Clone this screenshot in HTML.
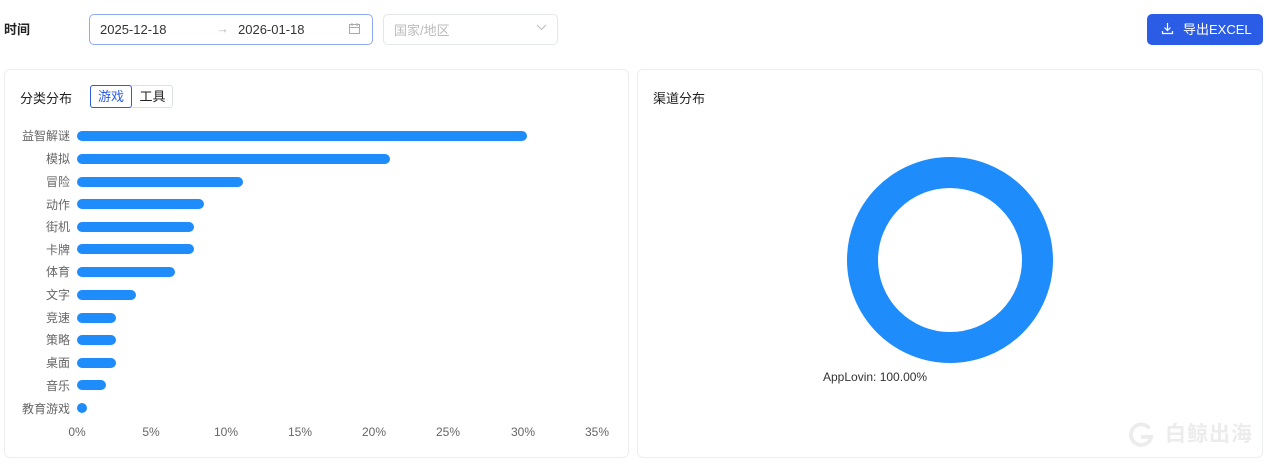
<!DOCTYPE html>
<html><head><meta charset="utf-8"><style>
*{box-sizing:border-box;margin:0;padding:0}
body{width:1269px;height:465px;background:#fff;font-family:"Liberation Sans","Noto Sans CJK SC",sans-serif;position:relative;overflow:hidden;color:#333}
.a{position:absolute}
.card{position:absolute;border:1px solid #eceef2;border-radius:6px;background:#fff}
.lbl{position:absolute;left:0;width:70px;font-size:12px;color:#666;text-align:right;white-space:nowrap}
.bar{position:absolute;left:77px;height:10px;border-radius:5px;background:#1e8cfa}
.tick{position:absolute;top:425px;font-size:12px;color:#666;transform:translateX(-50%)}
</style></head><body>
<div class="a" style="left:4px;top:19px;font-size:13px;font-weight:bold;color:#222">时间</div>
<div class="a" style="left:89px;top:14px;width:284px;height:31px;border:1px solid #8fa9f3;border-radius:5px"></div>
<div class="a" style="left:100px;top:22px;font-size:13px;color:#333">2025-12-18</div>
<div class="a" style="left:216px;top:21px;font-size:13px;color:#bbb">→</div>
<div class="a" style="left:238px;top:22px;font-size:13px;color:#333">2026-01-18</div>
<svg class="a" style="left:348px;top:22px" width="13" height="13" viewBox="0 0 13 13" fill="none" stroke="#aaa" stroke-width="1"><rect x="1.5" y="2.5" width="10" height="9"/><path d="M1.5 5.5h10M4 1v3M9 1v3"/></svg>
<div class="a" style="left:383px;top:14px;width:175px;height:31px;border:1px solid #e4e6ea;border-radius:5px"></div>
<div class="a" style="left:394px;top:20px;font-size:13px;color:#bbb">国家/地区</div>
<svg class="a" style="left:536px;top:24px" width="11" height="7" viewBox="0 0 11 7" fill="none" stroke="#bbb"><path d="M1 1l4.5 4.5L10 1"/></svg>
<div class="a" style="left:1147px;top:14px;width:116px;height:31px;background:#2b5ce6;border-radius:5px;color:#fff;font-size:13px;line-height:31px;padding-left:36px">导出EXCEL</div>
<svg class="a" style="left:1161px;top:22px" width="13" height="13" viewBox="0 0 13 13" fill="none" stroke="#fff" stroke-width="1.2"><path d="M6.5 1v7M3.5 5.5l3 3 3-3M1.5 9v2.5h10V9"/></svg>

<div class="card" style="left:4px;top:69px;width:625px;height:389px"></div>
<div class="card" style="left:637px;top:69px;width:626px;height:389px"></div>
<div class="a" style="left:20px;top:88px;font-size:13px;color:#222">分类分布</div>
<div class="a" style="left:90px;top:85px;width:83px;height:23px;border:1px solid #dcdfe6;border-radius:3px"></div>
<div class="a" style="left:90px;top:85px;width:42px;height:23px;border:1px solid #2b5ce6;border-radius:3px;color:#2b5ce6;font-size:13px;line-height:21px;text-align:center">游戏</div>
<div class="a" style="left:132px;top:85px;width:41px;height:23px;font-size:13px;line-height:23px;text-align:center;color:#222">工具</div>
<div class="a" style="left:653px;top:88px;font-size:13px;color:#222">渠道分布</div>

<div class="lbl" style="top:127px">益智解谜</div><div class="bar" style="top:131px;width:450px"></div>
<div class="lbl" style="top:150px">模拟</div><div class="bar" style="top:154px;width:313px"></div>
<div class="lbl" style="top:173px">冒险</div><div class="bar" style="top:177px;width:166px"></div>
<div class="lbl" style="top:196px">动作</div><div class="bar" style="top:199px;width:127px"></div>
<div class="lbl" style="top:218px">街机</div><div class="bar" style="top:222px;width:117px"></div>
<div class="lbl" style="top:241px">卡牌</div><div class="bar" style="top:244px;width:117px"></div>
<div class="lbl" style="top:263px">体育</div><div class="bar" style="top:267px;width:98px"></div>
<div class="lbl" style="top:286px">文字</div><div class="bar" style="top:290px;width:59px"></div>
<div class="lbl" style="top:309px">竞速</div><div class="bar" style="top:313px;width:39px"></div>
<div class="lbl" style="top:331px">策略</div><div class="bar" style="top:335px;width:39px"></div>
<div class="lbl" style="top:354px">桌面</div><div class="bar" style="top:358px;width:39px"></div>
<div class="lbl" style="top:377px">音乐</div><div class="bar" style="top:380px;width:29px"></div>
<div class="lbl" style="top:400px">教育游戏</div><div class="bar" style="top:403px;width:10px"></div>

<div class="tick" style="left:77px">0%</div>
<div class="tick" style="left:151px">5%</div>
<div class="tick" style="left:226px">10%</div>
<div class="tick" style="left:300px">15%</div>
<div class="tick" style="left:374px">20%</div>
<div class="tick" style="left:448px">25%</div>
<div class="tick" style="left:523px">30%</div>
<div class="tick" style="left:597px">35%</div>

<svg class="a" style="left:845px;top:155px" width="210" height="210"><circle cx="105" cy="105" r="87.5" fill="none" stroke="#1e8cfa" stroke-width="31"/></svg>
<div class="a" style="left:823px;top:370px;font-size:12px;color:#333">AppLovin: 100.00%</div>

<svg class="a" style="left:1127px;top:421px" width="28" height="28" viewBox="0 0 30 30" fill="none" stroke="#ececec" stroke-width="4"><path d="M24 8A11 11 0 1 0 26 17H15"/></svg>
<div class="a" style="left:1165px;top:422px;font-size:21px;line-height:26px;color:#ececec;font-weight:bold;letter-spacing:1px">白鲸出海</div>
</body></html>
